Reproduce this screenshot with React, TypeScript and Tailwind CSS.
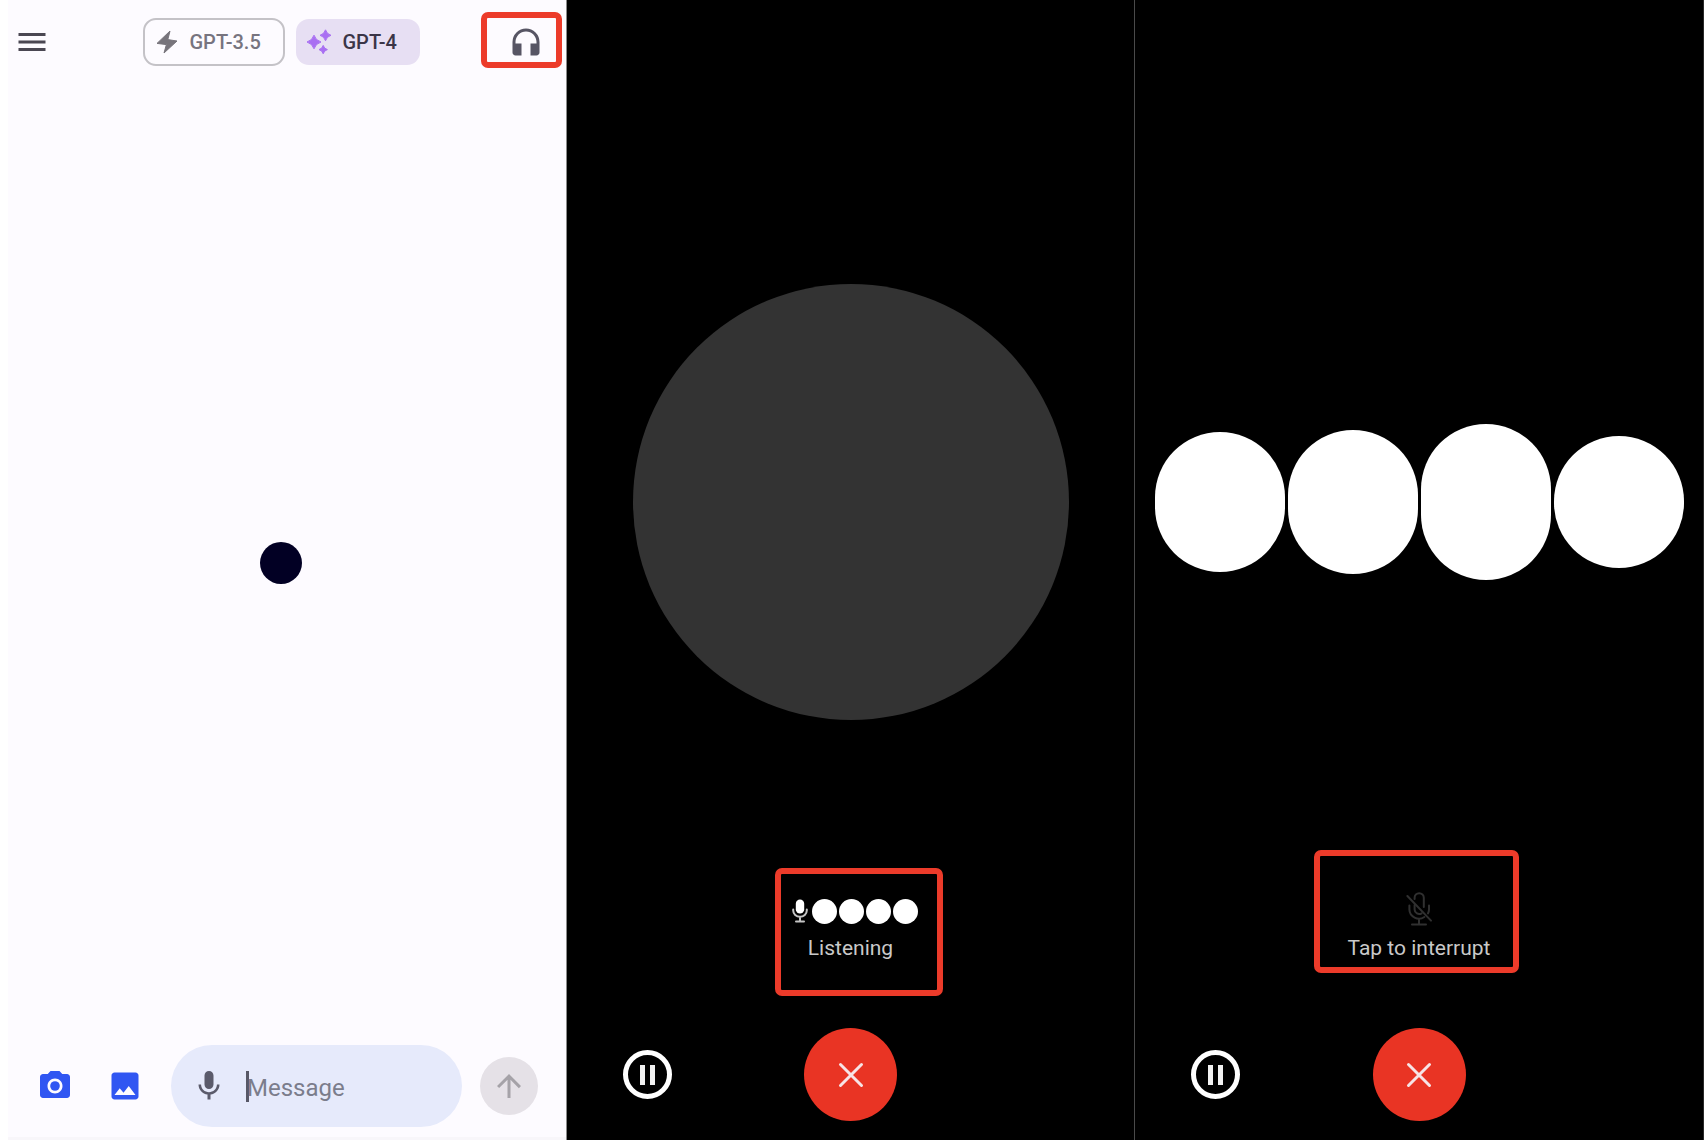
import type { ReactNode } from 'react'
import { MdArrowUpward, MdHeadphones, MdImage, MdMenu, MdMic, MdPhotoCamera } from 'react-icons/md'

const waveHeights = ['h-[140px]', 'h-[144px]', 'h-[156px]', 'h-[132px]']

function BoltIcon() {
  return (
    <svg viewBox="0 0 22 24" className="w-[22px] h-6 shrink-0" fill="#77747b" stroke="#77747b" strokeLinejoin="round" aria-hidden>
      <path d="M14 1 1 13.4 10.4 14.6 8 23 21 11 11.8 9.6Z" />
    </svg>
  )
}

function SparklesIcon() {
  return (
    <svg viewBox="0 0 26 26" className="w-[26px] h-[26px] shrink-0" fill="#a96ff2" aria-hidden>
      <path d="M8 6.2Q9.6 11.4 15 13 9.6 14.6 8 19.8 6.4 14.6 1 13 6.4 11.4 8 6.2Z" stroke="#a96ff2" strokeLinejoin="round" />
      <path d="M19.5.8Q20.7 5.1 25 6.3 20.7 7.5 19.5 11.8 18.3 7.5 14 6.3 18.3 5.1 19.5.8Z" stroke="#a96ff2" strokeLinejoin="round" />
      <path d="M17.2 16.4Q18.1 19.7 21.4 20.6 18.1 21.5 17.2 24.8 16.3 21.5 13 20.6 16.3 19.7 17.2 16.4Z" stroke="#a96ff2" strokeLinejoin="round" />
    </svg>
  )
}

function MicFilledIcon() {
  return (
    <svg viewBox="0 0 16 24" className="w-4 h-6 shrink-0" fill="none" stroke="#c4c4c4" strokeWidth="2" strokeLinecap="round" aria-hidden>
      <rect x="3.8" y=".6" width="8.4" height="14" rx="4.2" fill="#fff" stroke="none" />
      <path d="M1.2 10.6v1a6.8 6.2 0 0 0 13.6 0v-1M8 18.2V22M4 22.4h8" />
    </svg>
  )
}

function MicOffIcon() {
  return (
    <svg viewBox="0 0 26 34" className="w-[26px] h-[34px]" fill="none" stroke="#303030" strokeWidth="2" strokeLinecap="round" aria-hidden>
      <path d="M8.6 7V5.8a4.6 4.6 0 0 1 9.2 0V15M8.6 13v4.4a4.6 4.6 0 0 0 7 3.9" />
      <path d="M3.4 13.4v4.2a9.6 9.2 0 0 0 15 7.4M23 13.4v4a9 9 0 0 1-1 4M13 26.8V32M6 32.6h14" />
      <path d="M1.4 4 25 28.6" />
    </svg>
  )
}

function Highlight({ className }: { className: string }) {
  return <div className={`absolute pointer-events-none rounded-[7px] border-[6px] border-[#ec3b2a] ${className}`} aria-hidden />
}

function ChatScreen() {
  return (
    <section className="flex min-h-screen bg-white pl-2 border-r border-[#8a8a8a]">
      <div className="flex-1 min-w-0 flex flex-col bg-[#fdfbff] border-b-[3px] border-[#f8f6fa]">
        <header className="flex items-center justify-between pt-[18px] pl-1.5 pr-[22px]">
          <button type="button" aria-label="Menu" className="w-10 text-[#4a4752]">
            <MdMenu className="size-9" />
          </button>
          <div className="flex items-center gap-[11px]">
            <button
              type="button"
              className="flex items-center gap-3 h-12 px-[11px] w-[142px] rounded-[13px] border-2 border-[#c4c2c7] text-xl font-medium text-[#77747f]"
            >
              <BoltIcon />
              GPT-3.5
            </button>
            <button
              type="button"
              className="flex items-center gap-[11px] h-[46px] px-[10px] w-[124px] rounded-[13px] bg-[#e7dff3] text-xl font-medium text-[#3b3547]"
            >
              <SparklesIcon />
              GPT-4
            </button>
          </div>
          <div className="relative">
            <button type="button" aria-label="Voice conversation" className="block text-[#575564]">
              <MdHeadphones className="size-9" />
            </button>
            <Highlight className="-left-[27px] -right-[18px] -top-3 -bottom-2" />
          </div>
        </header>

        <main className="flex-1 flex items-center justify-center pt-3.5 pr-3">
          <div className="size-[42px] rounded-full bg-[#020024]" />
        </main>

        <footer className="flex items-center pl-[29px] pr-7 pb-2.5">
          <button type="button" aria-label="Camera" className="text-[#3056f2]">
            <MdPhotoCamera className="size-9" />
          </button>
          <button type="button" aria-label="Photos" className="ml-[34px] text-[#3056f2]">
            <MdImage className="size-9" />
          </button>
          <div className="ml-7 mr-[18px] flex-1 min-w-0 flex items-center h-[82px] pl-5 pr-6 rounded-full bg-[#e6eafb]">
            <button type="button" aria-label="Dictate" className="text-[#5b5b6b]">
              <MdMic className="size-9" />
            </button>
            <span className="ml-[19px] w-[3px] h-[31px] shrink-0 bg-[#585866]" aria-hidden />
            <input
              type="text"
              aria-label="Message"
              placeholder="Message"
              className="-ml-0.5 pt-1 flex-1 min-w-0 bg-transparent text-2xl text-[#5b5b6b] placeholder:text-[#7b7d8c] outline-none"
            />
          </div>
          <button
            type="button"
            aria-label="Send"
            className="flex items-center justify-center size-[58px] rounded-full bg-[#e5e1e7] text-[#a5a2a8]"
          >
            <MdArrowUpward className="size-9" />
          </button>
        </footer>
      </div>
    </section>
  )
}

function VoiceScreen({ stage, status, className }: { stage: ReactNode; status: ReactNode; className: string }) {
  return (
    <section className={`flex flex-col min-h-screen bg-black border-r ${className}`}>
      <div className="flex-1 flex items-center justify-center pt-28">{stage}</div>
      <div className="flex justify-center">{status}</div>
      <div className="grid grid-cols-[1fr_auto_1fr] items-center pt-[68px] pb-[19px]">
        <button
          type="button"
          aria-label="Pause"
          className="ml-14 flex items-center justify-center gap-[5px] size-[49px] rounded-full border-[5px] border-white"
        >
          <span className="w-[5px] h-5 bg-[#f2f2f2]" />
          <span className="w-[5px] h-5 bg-[#f2f2f2]" />
        </button>
        <button type="button" aria-label="End" className="flex items-center justify-center size-[93px] rounded-full bg-[#e93424]">
          <svg viewBox="0 0 26 26" className="size-[26px]" stroke="#f7e4e6" strokeWidth="3" strokeLinecap="round" aria-hidden>
            <path d="M2.5 2.5l21 21M23.5 2.5l-21 21" />
          </svg>
        </button>
      </div>
    </section>
  )
}

export default function App() {
  return (
    <div className="grid grid-cols-[minmax(0,567fr)_minmax(0,568fr)_minmax(0,569fr)] min-h-screen bg-black font-['Roboto',sans-serif]">
      <ChatScreen />

      <VoiceScreen
        className="border-[#4a4a4a]"
        stage={<div className="size-[436px] rounded-full bg-[#333333]" />}
        status={
          <div className="relative text-center">
            <div className="flex items-center h-[38px] pl-2 gap-1">
              <MicFilledIcon />
              <div className="flex gap-0.5">
                {[0, 1, 2, 3].map((i) => (
                  <span key={i} className="size-[25px] rounded-full bg-white" />
                ))}
              </div>
            </div>
            <p className="mt-1.5 text-[21px] leading-6 text-[#c9c9c9]">Listening</p>
            <Highlight className="-left-[9px] -right-[25px] -top-6 -bottom-9" />
          </div>
        }
      />

      <VoiceScreen
        className="border-[#2a2a2a]"
        stage={
          <div className="flex items-center gap-[3px]">
            {waveHeights.map((h) => (
              <span key={h} className={`w-[130px] rounded-full bg-white ${h}`} />
            ))}
          </div>
        }
        status={
          <div className="relative">
            <button type="button" className="block text-center">
              <span className="flex items-start justify-center h-[38px]">
                <MicOffIcon />
              </span>
              <span className="block mt-1.5 text-[21px] leading-6 text-[#c9c9c9]">Tap to interrupt</span>
            </button>
            <Highlight className="-left-[34px] -right-[29px] -top-[42px] -bottom-[13px]" />
          </div>
        }
      />
    </div>
  )
}
